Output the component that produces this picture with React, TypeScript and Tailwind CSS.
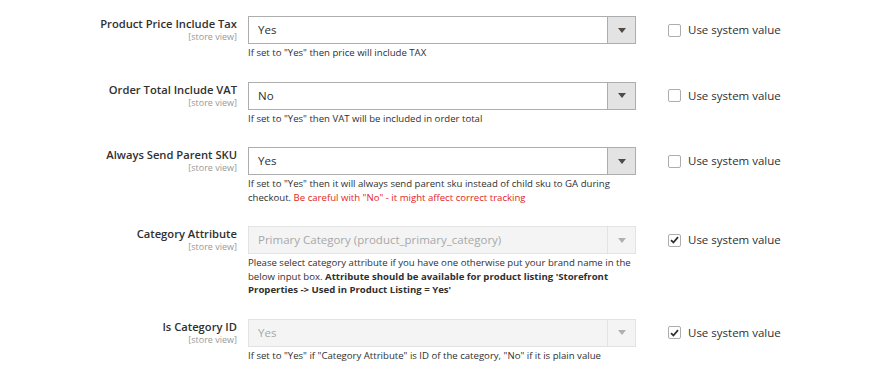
import React from "react";

type Row = {
  label: string;
  value: string;
  disabled?: boolean;
  checked?: boolean;
  note: React.ReactNode;
};

const rows: Row[] = [
  {
    label: "Product Price Include Tax",
    value: "Yes",
    note: <>If set to "Yes" then price will include TAX</>,
  },
  {
    label: "Order Total Include VAT",
    value: "No",
    note: <>If set to "Yes" then VAT will be included in order total</>,
  },
  {
    label: "Always Send Parent SKU",
    value: "Yes",
    note: (
      <>
        If set to "Yes" then it will always send parent sku instead of child sku to GA during checkout.{" "}
        <span className="text-[#e22626]">Be careful with "No" - it might affect correct tracking</span>
      </>
    ),
  },
  {
    label: "Category Attribute",
    value: "Primary Category (product_primary_category)",
    disabled: true,
    checked: true,
    note: (
      <>
        Please select category attribute if you have one otherwise put your brand name in the below input box.{" "}
        <b className="font-bold">
          Attribute should be available for product listing 'Storefront Properties -&gt; Used in Product Listing = Yes'
        </b>
      </>
    ),
  },
  {
    label: "Is Category ID",
    value: "Yes",
    disabled: true,
    checked: true,
    note: <>If set to "Yes" if "Category Attribute" is ID of the category, "No" if it is plain value</>,
  },
];

function Field({ row }: { row: Row }) {
  return (
    <div className="flex items-start">
      <div className="w-[237px] shrink-0 flex flex-col items-end">
        <div className="text-[11.2px] leading-[15px] font-semibold text-[#303030]">{row.label}</div>
        <div className="text-[9px] leading-[11px] text-[#999999]">[store view]</div>
      </div>
      <div className="w-[388px] ml-[11px] shrink-0">
        <div
          className={
            row.disabled
              ? "flex h-[28px] border border-[#e3e3e3] bg-[#f4f4f4]"
              : "flex h-[28px] border border-[#adadad] bg-white"
          }
        >
          <div
            className={
              row.disabled
                ? "flex-1 flex items-center pl-[9px] text-[11.5px] text-[#a8a8a8]"
                : "flex-1 flex items-center pl-[9px] text-[11.5px] text-[#303030]"
            }
          >
            {row.value}
          </div>
          <div
            className={
              row.disabled
                ? "w-[28px] flex items-center justify-center border-l border-[#e3e3e3] bg-[#f4f4f4]"
                : "w-[28px] flex items-center justify-center border-l border-[#adadad] bg-[#e3e3e3]"
            }
          >
            <svg width="8" height="5" viewBox="0 0 8 5">
              <path d="M0 0 L8 0 L4 5 Z" fill={row.disabled ? "#b0b0b0" : "#514943"} />
            </svg>
          </div>
        </div>
        <div className="mt-[2px] text-[9.6px] leading-[13.5px] text-[#303030]">{row.note}</div>
      </div>
      <div className="ml-[32px] h-[28px] flex items-center">
        <div
          className={
            row.checked
              ? "w-[13px] h-[13px] border border-[#adadad] rounded-[2px] bg-white flex items-center justify-center"
              : "w-[13px] h-[13px] border border-[#adadad] rounded-[2px] bg-white"
          }
        >
          {row.checked && (
            <svg width="9" height="8" viewBox="0 0 9 8">
              <path d="M1 4.2 L3.4 6.5 L8 1.2" stroke="#303030" strokeWidth="1.8" fill="none" />
            </svg>
          )}
        </div>
        <span className="ml-[7px] text-[11.5px] text-[#303030]">Use system value</span>
      </div>
    </div>
  );
}

export default function App() {
  return (
    <div
      className="w-[890px] h-[373px] bg-white overflow-hidden pt-[16px]"
      style={{ fontFamily: '"Open Sans", "Noto Sans", sans-serif' }}
    >
      <div className="flex flex-col gap-[22px]">
        {rows.map((r) => (
          <Field key={r.label} row={r} />
        ))}
      </div>
    </div>
  );
}
